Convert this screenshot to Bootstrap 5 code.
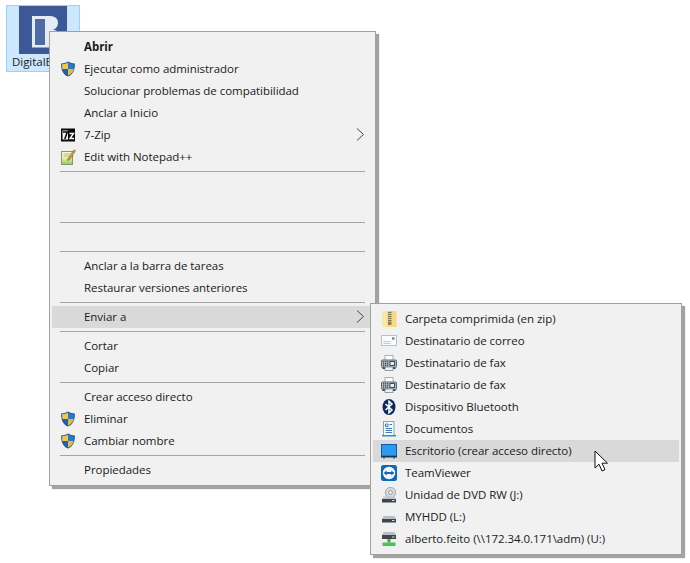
<!DOCTYPE html>
<html lang="es">
<head>
<meta charset="utf-8">
<title>Menú contextual</title>
<link rel="stylesheet" href="https://cdn.jsdelivr.net/npm/bootstrap@5.3.0/dist/css/bootstrap.min.css">
<style>
html,body{height:100%;}
body{background:#fff;font-family:"Open Sans","Noto Sans",sans-serif;font-size:11.5px;letter-spacing:-.04px;color:#1a1a1a;overflow:hidden;position:relative;}
.desk-item{position:absolute;left:6px;top:5px;width:74px;height:67px;background:#cce8ff;border:1px solid #99d1ff;}
.desk-logo{display:block;margin:0 0 0 12px;}
.desk-label{white-space:nowrap;line-height:16px;margin:0 0 0 5px;}
.ctx{position:absolute;background:#f1f1f1;border:1px solid #a0a0a0;box-shadow:3px 3px 1px #a3a3a3;padding:4px 2px;}
.ctx-main{left:49px;top:31px;width:327px;}
.ctx-sub{left:370px;top:303px;width:312px;}
.ctx-row{height:22px;position:relative;padding-left:32px;white-space:nowrap;}
.ctx-text{display:block;line-height:22px;}
.ctx-ico{position:absolute;left:8px;top:3px;width:16px;height:16px;}
.ctx-hot{background:#d9d9d9;}
.ctx-sep{height:1px;background:#a5a5a5;margin:3px 8px;}
.ctx-arrow{position:absolute;right:9px;top:4px;width:8px;height:13px;}
.pointer{position:absolute;left:594px;top:450px;width:15px;height:22px;}
.bold-item{font-weight:700;}
</style>
</head>
<body>
<svg width="0" height="0" class="position-absolute">
<defs>
<symbol id="i-shield" viewBox="0 0 16 16">
<path d="M8 .4c2 1.300 4 1.900 6.800 2 .3 6.200-1.600 10.800-6.800 13.200C2.800 13.200.9 8.600 1.200 2.400 4 2.300 6 1.700 8 .4z" fill="#1b4f91"/>
<path d="M8 1.600V8H2.300c-.2-1.500-.2-3-.1-4.700C4.400 3.100 6.200 2.600 8 1.600z" fill="#f3c64f"/>
<path d="M8 8h5.700c-.6 3.100-2.600 5.500-5.700 6.700z" fill="#e8b93f"/>
<path d="M8 1.600c1.800 1 3.600 1.500 5.800 1.700.1 1.700.1 3.200-.1 4.700H8z" fill="#2a78c8"/>
<path d="M2.300 8H8v6.700C4.900 13.500 2.900 11.100 2.300 8z" fill="#1f62ad"/>
</symbol>
<symbol id="i-fax" viewBox="0 0 16 16">
<rect x="4" y=".5" width="8" height="5" fill="#fff" stroke="#aab0b5"/>
<rect x=".5" y="5" width="15" height="7.500" rx="1" fill="#aeb8c0" stroke="#5d6873"/>
<path d="M2 6.800h1.200M4 6.800h1.200M6 6.800h1.200M2 8.800h1.200M4 8.800h1.200M6 8.800h1.200M2 10.800h1.200M4 10.800h1.200M6 10.800h1.200" stroke="#1f2b38"/>
<rect x="9" y="6.500" width="4.500" height="4" fill="#e8eef3" stroke="#37495a"/>
<rect x="1.500" y="12.500" width="13" height="1.500" fill="#38444f"/>
<rect x="4" y="12" width="8" height="3.500" fill="#eef1f3" stroke="#6f7a84" stroke-width=".7"/>
</symbol>
</defs>
</svg>

<div class="desk-item">
<svg class="desk-logo" width="48" height="48" viewBox="0 0 48 48" aria-hidden="true">
<rect width="48" height="48" fill="#3c5896"/>
<path d="M13 10h17c6 0 9 2.500 9 7 0 3.500-2 5.600-5 6.600 4.600.9 7.500 3.600 7.500 8.400 0 6-5 9.500-12 9.500H13z" fill="#e6ecf4"/>
<rect x="16" y="13" width="10" height="26" fill="#4e6ba8"/>
</svg>
<div class="desk-label">DigitalBook</div>
</div>

<div class="ctx ctx-main">
<div class="ctx-row bold-item"><span class="ctx-text">Abrir</span></div>
<div class="ctx-row"><svg class="ctx-ico"><use href="#i-shield"/></svg><span class="ctx-text">Ejecutar como administrador</span></div>
<div class="ctx-row"><span class="ctx-text">Solucionar problemas de compatibilidad</span></div>
<div class="ctx-row"><span class="ctx-text">Anclar a Inicio</span></div>
<div class="ctx-row">
<svg class="ctx-ico" viewBox="0 0 16 16"><rect x="1" y="1.500" width="14" height="13" fill="#0a0a0a"/><rect x="2.500" y="3.500" width="5.500" height="9" fill="#f6f6f6"/><path d="M3 5h4.300L4.800 12" fill="none" stroke="#0a0a0a" stroke-width="1.600"/><path d="M9.500 6.500h4l-3.500 5h4" fill="none" stroke="#fff" stroke-width="1.400"/></svg>
<span class="ctx-text">7-Zip</span>
<svg class="ctx-arrow" viewBox="0 0 8 13"><path d="M1 .5 7.500 6.500 1 12.500" fill="none" stroke="#444" stroke-width="1"/></svg>
</div>
<div class="ctx-row">
<svg class="ctx-ico" viewBox="0 0 16 16"><defs><linearGradient id="np" x1="0" y1="0" x2="0" y2="1"><stop offset="0" stop-color="#faf6d8"/><stop offset=".5" stop-color="#eef0a0"/><stop offset="1" stop-color="#8fcb55"/></linearGradient></defs><rect x="1.500" y="2.500" width="11" height="13" fill="url(#np)" stroke="#7e9a7a"/><path d="M3.500 5h7M3.500 7h6" stroke="#b9b9a8"/><path d="M8 9.500 14 .8l1.500 1L10 10.500l-2.500 1z" fill="#d6a92f" stroke="#5d4c18" stroke-width=".5"/></svg>
<span class="ctx-text">Edit with Notepad++</span>
</div>
<div class="ctx-sep"></div>
<div class="ctx-row"></div>
<div class="ctx-row"></div>
<div class="ctx-sep"></div>
<div class="ctx-row"></div>
<div class="ctx-sep"></div>
<div class="ctx-row"><span class="ctx-text">Anclar a la barra de tareas</span></div>
<div class="ctx-row"><span class="ctx-text">Restaurar versiones anteriores</span></div>
<div class="ctx-sep"></div>
<div class="ctx-row ctx-hot"><span class="ctx-text">Enviar a</span>
<svg class="ctx-arrow" viewBox="0 0 8 13"><path d="M1 .5 7.500 6.500 1 12.500" fill="none" stroke="#444" stroke-width="1"/></svg>
</div>
<div class="ctx-sep"></div>
<div class="ctx-row"><span class="ctx-text">Cortar</span></div>
<div class="ctx-row"><span class="ctx-text">Copiar</span></div>
<div class="ctx-sep"></div>
<div class="ctx-row"><span class="ctx-text">Crear acceso directo</span></div>
<div class="ctx-row"><svg class="ctx-ico"><use href="#i-shield"/></svg><span class="ctx-text">Eliminar</span></div>
<div class="ctx-row"><svg class="ctx-ico"><use href="#i-shield"/></svg><span class="ctx-text">Cambiar nombre</span></div>
<div class="ctx-sep"></div>
<div class="ctx-row"><span class="ctx-text">Propiedades</span></div>
</div>

<div class="ctx ctx-sub">
<div class="ctx-row">
<svg class="ctx-ico" viewBox="0 0 16 16"><rect x="1.500" y="0" width="14" height="16" rx="1" fill="#f9d97c"/><rect x="1.500" y="0" width="4.500" height="16" fill="#fbe7a6"/><rect x="7" y="0" width="3.500" height="12" fill="#d8c98f"/><path d="M7 1.500h3.500M7 3.500h3.500M7 5.500h3.500M7 7.500h3.500M7 9.500h3.500" stroke="#7d7659"/><rect x="7" y="10.500" width="3.500" height="3.500" fill="#8b8463"/></svg>
<span class="ctx-text">Carpeta comprimida (en zip)</span></div>
<div class="ctx-row">
<svg class="ctx-ico" viewBox="0 0 16 16"><rect x=".5" y="2.500" width="15" height="10" fill="#f8fafc" stroke="#b4c2cc"/><path d="M2.500 8.500h7M2.500 10.500h7" stroke="#c0ccd5"/><path d="M11 5.500h2.500" stroke="#5f7688" stroke-width="2"/></svg>
<span class="ctx-text">Destinatario de correo</span></div>
<div class="ctx-row"><svg class="ctx-ico"><use href="#i-fax"/></svg><span class="ctx-text">Destinatario de fax</span></div>
<div class="ctx-row"><svg class="ctx-ico"><use href="#i-fax"/></svg><span class="ctx-text">Destinatario de fax</span></div>
<div class="ctx-row">
<svg class="ctx-ico" viewBox="0 0 16 16"><ellipse cx="8" cy="8" rx="6.500" ry="8" fill="#0b2a5c"/><path d="M4.500 5 11 11 8 13.800V2.200L11 5 4.500 11" fill="none" stroke="#fff" stroke-width="1.500"/></svg>
<span class="ctx-text">Dispositivo Bluetooth</span></div>
<div class="ctx-row">
<svg class="ctx-ico" viewBox="0 0 16 16"><rect x="2.500" y=".5" width="10.500" height="14" fill="#f7fafd" stroke="#7ca4cc"/><path d="M4.500 3h2.500v2.500H4.500zM8.500 3.500H11M4.500 7.500H11M4.500 9.500H11M4.500 11.500H11" fill="none" stroke="#3d7ab5"/><rect x="1" y="14" width="14" height="1.500" fill="#3d8ac8"/></svg>
<span class="ctx-text">Documentos</span></div>
<div class="ctx-row ctx-hot">
<svg class="ctx-ico" viewBox="0 0 16 16"><rect x=".5" y="1.500" width="15" height="11.500" fill="#2a9bf0" stroke="#0d5a9c"/><rect x="0" y="13" width="16" height="1.500" fill="#17375a"/><path d="M2 14.500v1h2v-1zM12 14.500v1h2v-1z" fill="#2f4f6f"/></svg>
<span class="ctx-text">Escritorio (crear acceso directo)</span></div>
<div class="ctx-row">
<svg class="ctx-ico" viewBox="0 0 16 16"><rect width="16" height="16" rx="2.500" fill="#0e68b8"/><circle cx="8" cy="8" r="6.200" fill="#f4f8fc"/><path d="M2.700 8 5.700 5.500V7h4.600V5.500L13.300 8l-3 2.500V9H5.700v1.500z" fill="#0e68b8"/></svg>
<span class="ctx-text">TeamViewer</span></div>
<div class="ctx-row">
<svg class="ctx-ico" viewBox="0 0 16 16"><circle cx="9.500" cy="5.500" r="5.200" fill="#d4d9dc" stroke="#a3a9ae"/><circle cx="9.500" cy="5.500" r="1.800" fill="#fff" stroke="#8f959a"/><path d="M2.500 9.500h11l1.500 2.500H1z" fill="#c4c8cb"/><rect x="1" y="12" width="14" height="3.500" fill="#3f464c"/><rect x="11" y="13" width="2.500" height="1" fill="#d5d9dc"/></svg>
<span class="ctx-text">Unidad de DVD RW (J:)</span></div>
<div class="ctx-row">
<svg class="ctx-ico" viewBox="0 0 16 16"><path d="M2.500 7h11l1.500 3H1z" fill="#b9bec2"/><rect x="1" y="10" width="14" height="3.500" fill="#3f464c"/><rect x="11" y="11" width="2.500" height="1" fill="#d5d9dc"/></svg>
<span class="ctx-text">MYHDD (L:)</span></div>
<div class="ctx-row">
<svg class="ctx-ico" viewBox="0 0 16 16"><path d="M2.500 1h11l1.500 3H1z" fill="#b9bec2"/><rect x="1" y="4" width="14" height="4" fill="#3f464c"/><rect x="11" y="5.500" width="2.500" height="1" fill="#d5d9dc"/><rect x="6.500" y="8" width="3" height="3.500" fill="#3fae49"/><rect x="1.500" y="11.500" width="13" height="3.500" fill="#4cc157"/></svg>
<span class="ctx-text">alberto.feito (\\172.34.0.171\adm) (U:)</span></div>
</div>

<svg class="pointer" viewBox="0 0 15 22" aria-hidden="true"><path d="M1 1v17l4-3.800L8 21l3-1.400-3-6.400h5.500z" fill="#fff" stroke="#111" stroke-width="1"/></svg>
<script src="https://cdn.jsdelivr.net/npm/bootstrap@5.3.0/dist/js/bootstrap.bundle.min.js"></script>
</body>
</html>
